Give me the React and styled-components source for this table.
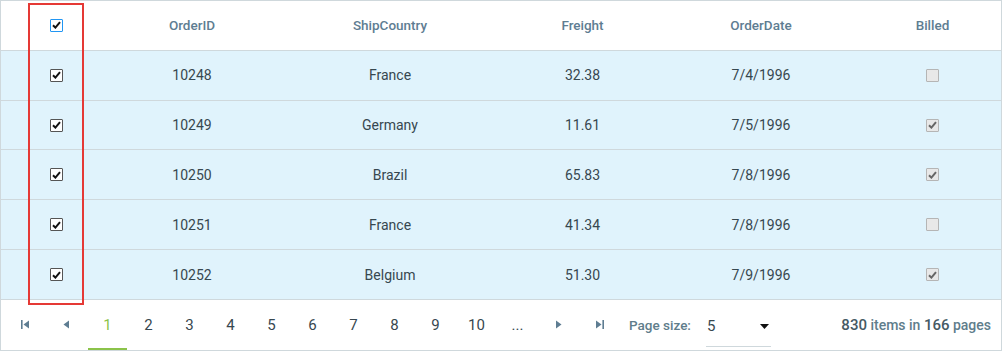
import React from 'react'
import styled, { createGlobalStyle } from 'styled-components'

const GlobalStyle = createGlobalStyle`
  html, body {
    margin: 0;
    padding: 0;
    background: #fff;
  }
  * { box-sizing: border-box; }
`

const orders = [
  { id: 10248, country: 'France', freight: '32.38', date: '7/4/1996', billed: false },
  { id: 10249, country: 'Germany', freight: '11.61', date: '7/5/1996', billed: true },
  { id: 10250, country: 'Brazil', freight: '65.83', date: '7/8/1996', billed: true },
  { id: 10251, country: 'France', freight: '41.34', date: '7/8/1996', billed: false },
  { id: 10252, country: 'Belgium', freight: '51.30', date: '7/9/1996', billed: true },
]

const columns = '110px 162px 234px 151px 206px 1fr'

const GridWrap = styled.div`
  position: relative;
  width: 1002px;
  height: 351px;
  border: 1px solid #cfd8dc;
  font-family: Roboto, "Liberation Sans", Arial, sans-serif;
  background: #fff;
  display: flex;
  flex-direction: column;
`

const Row = styled.div`
  display: grid;
  grid-template-columns: ${columns};
  height: ${p => p.$h}px;
  align-items: center;
  background: ${p => (p.$head ? '#fff' : '#e0f3fc')};
  border-bottom: 1px solid #cfd8dc;
`

const HeadCell = styled.div`
  text-align: center;
  font-size: 13.5px;
  font-weight: 500;
  color: #5e7d92;
`

const Cell = styled.div`
  text-align: center;
  font-size: 14px;
  color: #37474f;
  display: flex;
  justify-content: center;
`

const Box = styled.span`
  width: 13px;
  height: 13px;
  display: inline-flex;
  align-items: center;
  justify-content: center;
  border: 1px solid ${p => (p.$disabled ? '#b5b5b5' : p.$head ? '#2196f3' : '#555')};
  background: ${p => (p.$disabled ? '#e8e8e8' : '#fff')};
  border-radius: 1px;
`

const Highlight = styled.div`
  position: absolute;
  left: 27px;
  top: 2px;
  width: 56px;
  height: 302px;
  border: 2px solid #e53935;
  pointer-events: none;
`

const Footer = styled.div`
  flex: 1;
  display: flex;
  align-items: center;
  padding: 0 0 0 4px;
  color: #37474f;
  font-size: 14px;
`

const PagerBtn = styled.div`
  width: 41px;
  height: 50px;
  display: flex;
  align-items: center;
  justify-content: center;
  position: relative;
  color: ${p => (p.$active ? '#8bc34a' : '#37474f')};
  font-size: 15px;
  &::after {
    content: '';
    display: ${p => (p.$active ? 'block' : 'none')};
    position: absolute;
    left: 1px;
    right: 1px;
    bottom: 0;
    height: 2px;
    background: #8bc34a;
  }
`

const SizeLabel = styled.span`
  color: #607d8b;
  font-size: 13.5px;
  font-weight: 500;
  margin-left: 9px;
`

const Select = styled.div`
  width: 65px;
  height: 32px;
  margin-left: 15px;
  margin-top: 12px;
  border-bottom: 1px solid #cfd8dc;
  display: flex;
  align-items: flex-start;
  justify-content: space-between;
  padding: 2px 2px 0 1px;
  font-size: 15px;
  color: #37474f;
`

const Info = styled.div`
  margin-left: auto;
  margin-right: 10px;
  font-size: 14px;
  color: #607d8b;
  font-weight: 500;
  b {
    color: #455a64;
    font-size: 15px;
    font-weight: 500;
  }
`

function Check({ checked, head, disabled }) {
  return (
    <Box $head={head} $disabled={disabled}>
      {checked && (
        <svg width="9" height="8" viewBox="0 0 9 8">
          <path d="M1 4.2 L3.4 6.6 L8 1.2" fill="none" stroke={disabled ? '#666' : '#111'} strokeWidth="2" />
        </svg>
      )}
    </Box>
  )
}

const iconColor = '#5e7d92'

function FirstIcon() {
  return (
    <svg width="9" height="9" viewBox="0 0 9 9">
      <rect x="0" y="0" width="1.6" height="9" fill={iconColor} />
      <path d="M8 0.5 L2.5 4.5 L8 8.5 Z" fill={iconColor} />
    </svg>
  )
}
function PrevIcon() {
  return (
    <svg width="7" height="9" viewBox="0 0 7 9">
      <path d="M6 0.5 L0.5 4.5 L6 8.5 Z" fill={iconColor} />
    </svg>
  )
}
function NextIcon() {
  return (
    <svg width="7" height="9" viewBox="0 0 7 9">
      <path d="M1 0.5 L6.5 4.5 L1 8.5 Z" fill={iconColor} />
    </svg>
  )
}
function LastIcon() {
  return (
    <svg width="9" height="9" viewBox="0 0 9 9">
      <path d="M1 0.5 L6.5 4.5 L1 8.5 Z" fill={iconColor} />
      <rect x="7.4" y="0" width="1.6" height="9" fill={iconColor} />
    </svg>
  )
}

export default function App() {
  const pages = [1, 2, 3, 4, 5, 6, 7, 8, 9, 10]
  return (
    <>
      <GlobalStyle />
      <GridWrap>
        <Row $head $h={50}>
          <Cell><Check checked head /></Cell>
          <HeadCell>OrderID</HeadCell>
          <HeadCell>ShipCountry</HeadCell>
          <HeadCell>Freight</HeadCell>
          <HeadCell>OrderDate</HeadCell>
          <HeadCell>Billed</HeadCell>
        </Row>
        {orders.map(o => (
          <Row key={o.id} $h={50}>
            <Cell><Check checked /></Cell>
            <Cell>{o.id}</Cell>
            <Cell>{o.country}</Cell>
            <Cell>{o.freight}</Cell>
            <Cell>{o.date}</Cell>
            <Cell><Check checked={o.billed} disabled /></Cell>
          </Row>
        ))}
        <Footer>
          <PagerBtn><FirstIcon /></PagerBtn>
          <PagerBtn><PrevIcon /></PagerBtn>
          {pages.map(n => (
            <PagerBtn key={n} $active={n === 1}>{n}</PagerBtn>
          ))}
          <PagerBtn>...</PagerBtn>
          <PagerBtn><NextIcon /></PagerBtn>
          <PagerBtn><LastIcon /></PagerBtn>
          <SizeLabel>Page size:</SizeLabel>
          <Select>
            <span>5</span>
            <svg width="9" height="5" viewBox="0 0 9 5" style={{ marginTop: 7 }}>
              <path d="M0 0 L9 0 L4.5 5 Z" fill="#111" />
            </svg>
          </Select>
          <Info><b>830</b> items in <b>166</b> pages</Info>
        </Footer>
        <Highlight />
      </GridWrap>
    </>
  )
}
